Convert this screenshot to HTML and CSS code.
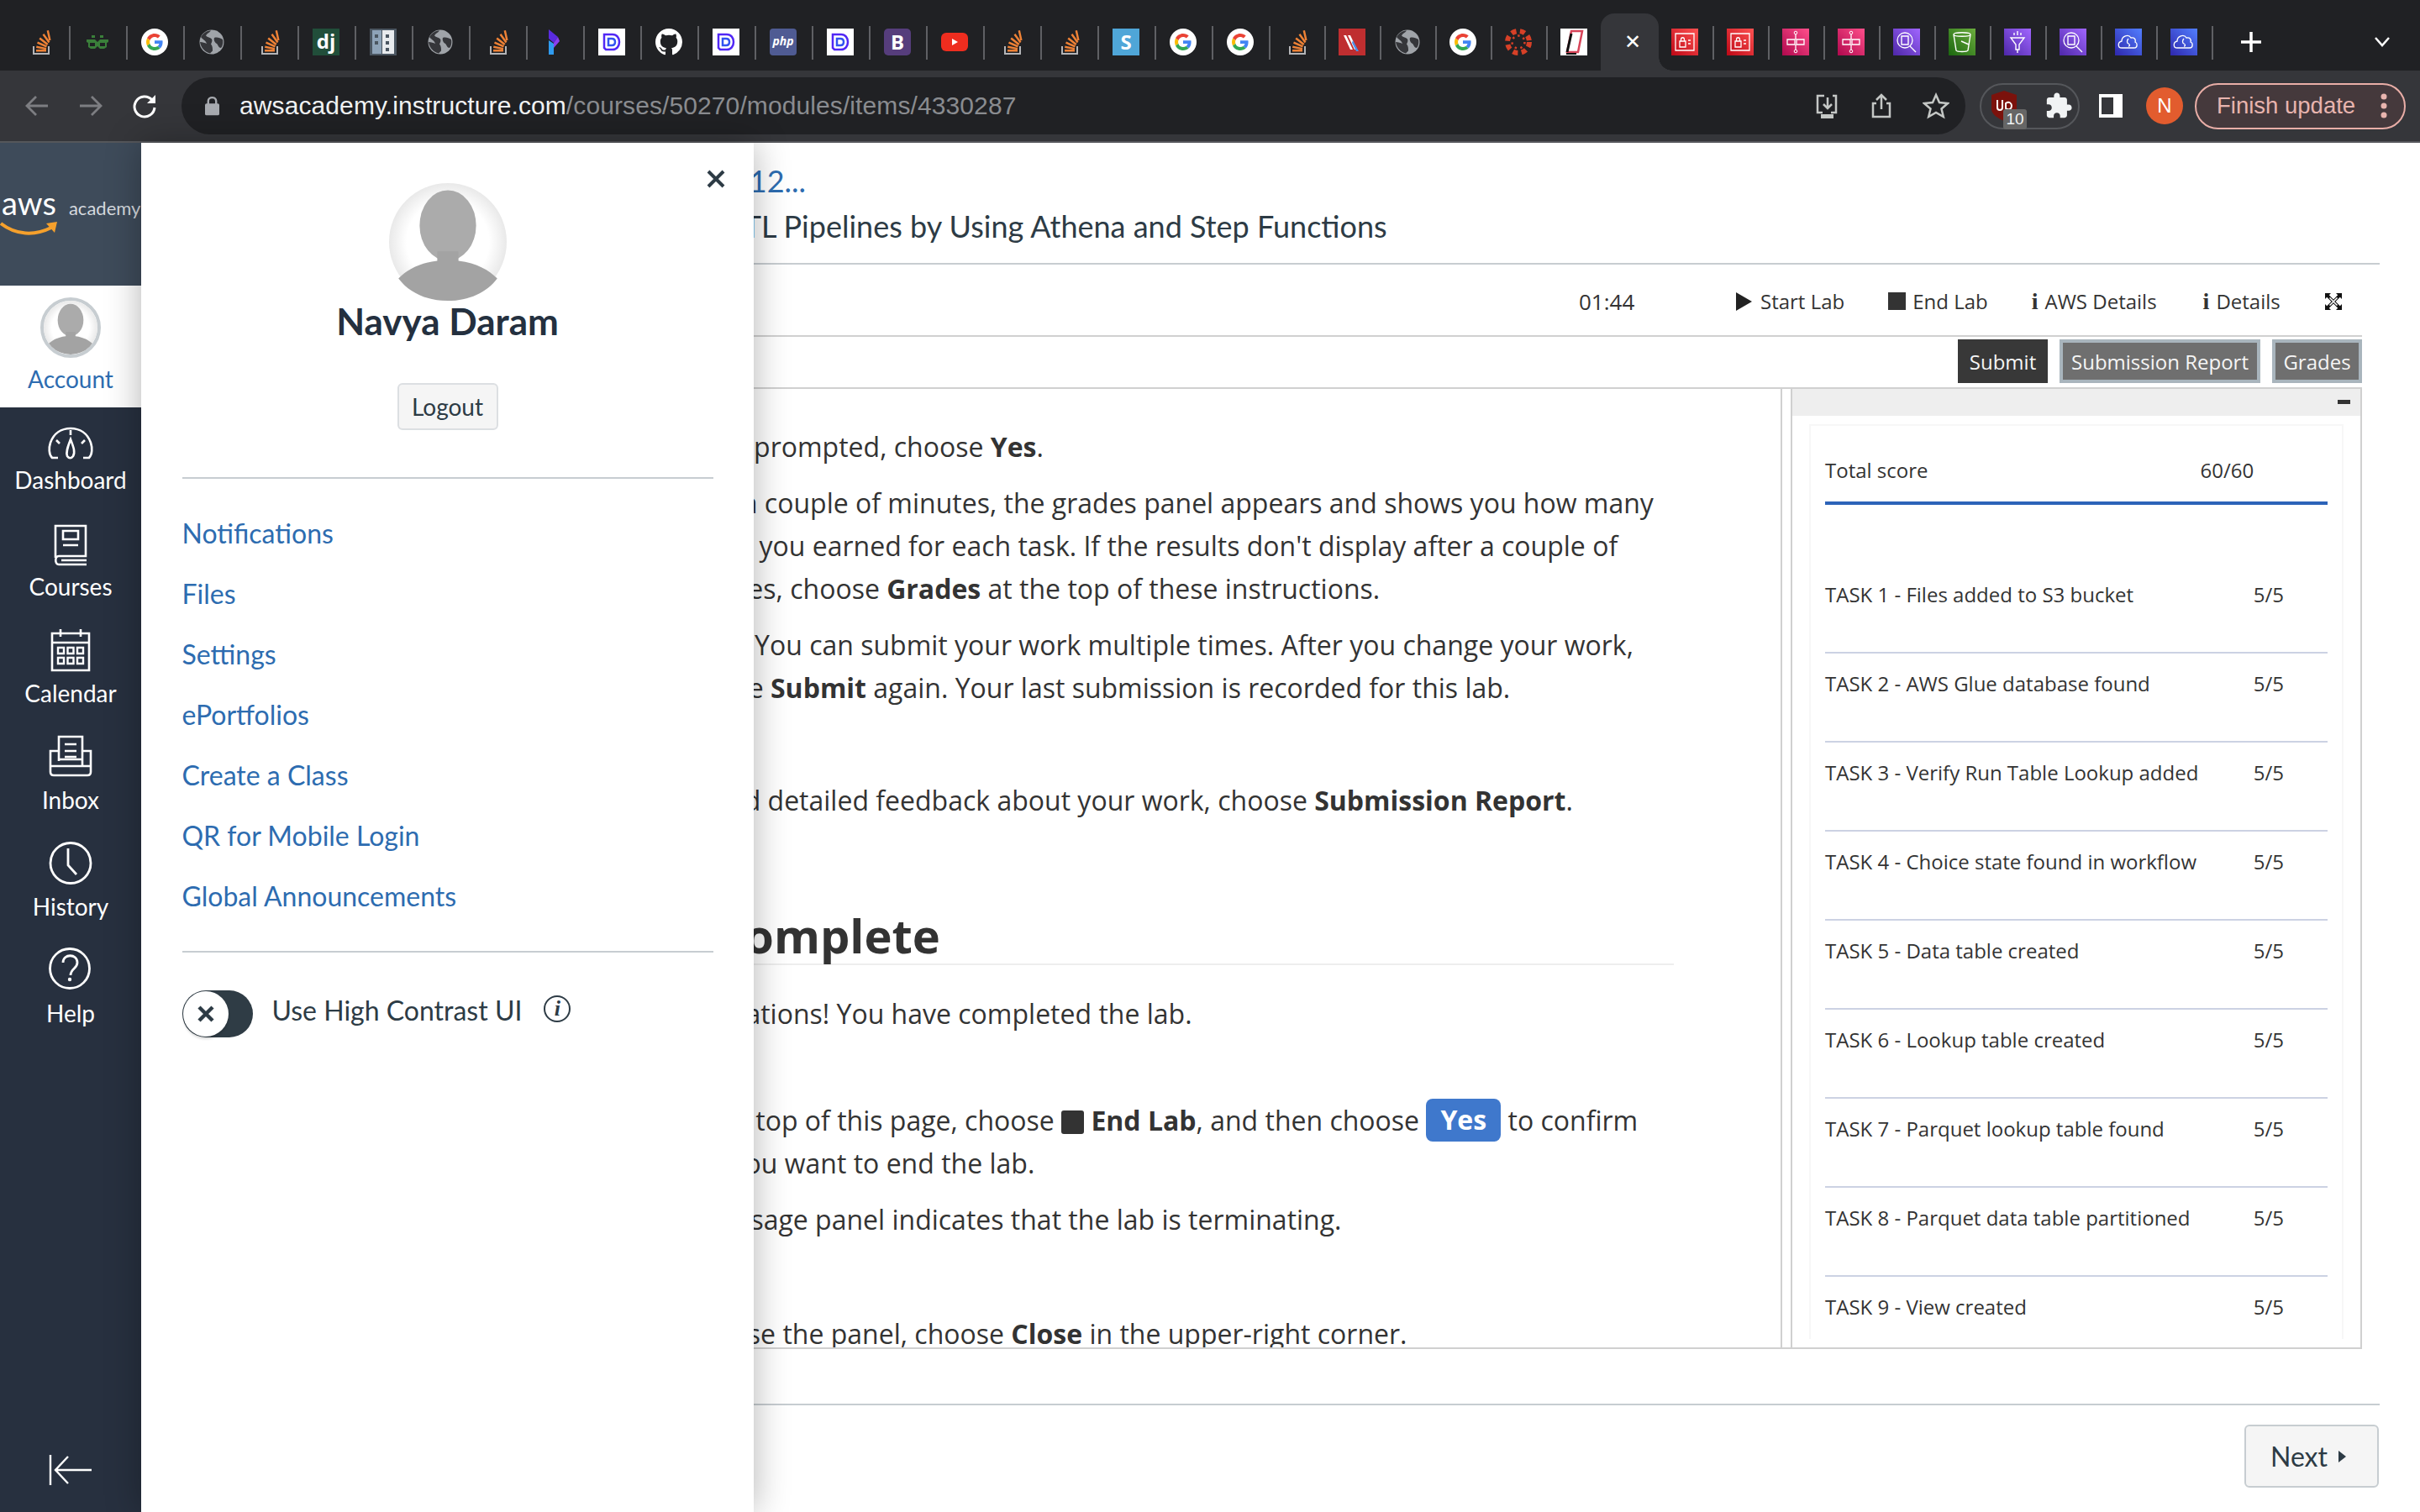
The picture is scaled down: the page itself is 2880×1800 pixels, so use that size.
FILE: index.html
```html
<!DOCTYPE html>
<html lang="en">
<head>
    <meta charset="UTF-8">
    <title>AWS Academy Lab</title>
    <link rel="stylesheet" href="styles.css">
</head>
<body>

    <!-- shared icons -->
    <svg class="defs" width="0" height="0">
        <defs>
            <symbol id="so" viewBox="0 0 32 32">
                <path d="M7 21v10h20V21h-2v8H9v-8z" fill="#b4b5b8"/>
                <path d="M11 25h12v2.500H11zM11.500 20.500l11.700 2.400-.5 2.400-11.700-2.400zM13 15.500l11 4.800-1 2.300-11-4.800zM16 10.500l9.500 7.500-1.600 2-9.500-7.500zM20.500 6l7 9.700-2 1.500-7-9.700zM26 2l2.600 11.800-2.400.5L23.600 2.500z" fill="#ef8236"/>
            </symbol>
            <symbol id="gfg" viewBox="0 0 32 32">
                <path d="M3 13h10l3 3 3-3h10v3l-2 1v5l-3 2h-5l-3-3-3 3H8l-3-2v-5l-2-1zM7 17v4h6v-4zM19 17v4h6v-4zM9 8h4v3H9zM19 8h4v3h-4z" fill="#3a7f3a"/>
            </symbol>
            <symbol id="g" viewBox="0 0 32 32">
                <circle cx="16" cy="16" r="16" fill="#fff"/>
                <g transform="translate(6 6) scale(.4167)">
                    <path d="M24 9.500c3.540 0 6.710 1.220 9.210 3.600l6.850-6.850C35.900 2.380 30.470 0 24 0 14.620 0 6.510 5.380 2.560 13.220l7.980 6.190C12.430 13.720 17.740 9.500 24 9.500z" fill="#EA4335"/>
                    <path d="M46.980 24.550c0-1.570-.15-3.090-.38-4.550H24v9.020h12.940c-.58 2.960-2.260 5.480-4.780 7.180l7.730 6c4.510-4.180 7.090-10.360 7.090-17.650z" fill="#4285F4"/>
                    <path d="M10.530 28.590c-.48-1.450-.76-2.990-.76-4.590s.27-3.140.76-4.590l-7.980-6.190C.92 16.460 0 20.120 0 24c0 3.880.92 7.540 2.560 10.780l7.970-6.190z" fill="#FBBC05"/>
                    <path d="M24 48c6.480 0 11.930-2.130 15.890-5.810l-7.730-6c-2.150 1.450-4.920 2.300-8.160 2.300-6.260 0-11.570-4.220-13.470-9.910l-7.980 6.190C6.510 42.620 14.620 48 24 48z" fill="#34A853"/>
                </g>
            </symbol>
            <symbol id="globe" viewBox="0 0 32 32">
                <circle cx="16" cy="16" r="14.500" fill="#a0a4a9"/>
                <path d="M15 2.500c-2 2.500-5 3.500-6 6 2 2 5 2 7 4 1 2 0 4-1 6 2 2 2 5 2 8l-3 3C8 28 3 23 2 16c3 0 6 1 8 2-1-4-5-5-7-8C6 5 10 2.500 15 2.500zM19 11c3-1 7 0 10 2 .8 4 0 8-2 10-3 0-3-3-5-5-2-1-4-4-3-7z" fill="#35363a"/>
            </symbol>
            <symbol id="dv" viewBox="0 0 32 32">
                <rect width="32" height="32" fill="#fff"/>
                <path d="M7 7h10c5 0 8 4 8 9s-3 9-8 9H9l-2-2z" fill="none" stroke="#5127f5" stroke-width="2.500"/>
                <path d="M12 20v-8h4c3 0 4 2 4 4s-1 4-4 4z" fill="none" stroke="#3153f0" stroke-width="2.500"/>
            </symbol>
            <symbol id="gh" viewBox="0 0 16 16">
                <path d="M8 0C3.580 0 0 3.580 0 8c0 3.540 2.290 6.530 5.470 7.590.4.07.55-.17.55-.38 0-.19-.01-.82-.01-1.490-2.010.37-2.530-.49-2.690-.94-.09-.23-.48-.94-.82-1.130-.28-.15-.68-.52-.01-.53.63-.01 1.080.58 1.230.82.72 1.210 1.870.87 2.330.66.07-.52.28-.87.51-1.070-1.780-.2-3.640-.89-3.640-3.950 0-.87.31-1.590.82-2.150-.08-.2-.36-1.020.08-2.120 0 0 .67-.21 2.200.82.64-.18 1.320-.27 2-.27s1.360.09 2 .27c1.530-1.040 2.200-.82 2.200-.82.44 1.100.16 1.920.08 2.120.51.56.82 1.270.82 2.150 0 3.070-1.870 3.750-3.650 3.950.29.25.54.73.54 1.480 0 1.070-.01 1.930-.01 2.200 0 .21.15.46.55.38A8.013 8.013 0 0016 8c0-4.420-3.580-8-8-8z" fill="#fff"/>
            </symbol>
            <symbol id="iam" viewBox="0 0 32 32">
                <rect width="32" height="32" fill="url(#red)"/>
                <path d="M5 6h22v20H5zM10 15h7v7h-7zM11.500 15v-2c0-3 4-3 4 0v2M20 14h3M20 18h3" fill="none" stroke="#fff" stroke-width="1.300"/>
            </symbol>
            <symbol id="sfn" viewBox="0 0 32 32">
                <rect width="32" height="32" fill="url(#pink)"/>
                <path d="M16 7v6M16 19v6M6 13h9v6H6zM17 13h9v6h-9z" fill="none" stroke="#fff" stroke-width="1.300"/>
                <circle cx="16" cy="5" r="1.800" fill="none" stroke="#fff"/>
                <circle cx="16" cy="27" r="1.800" fill="none" stroke="#fff"/>
            </symbol>
            <symbol id="athena" viewBox="0 0 32 32">
                <rect width="32" height="32" fill="url(#purple)"/>
                <circle cx="14" cy="14" r="9" fill="none" stroke="#fff" stroke-width="1.300"/>
                <path d="M10 9h8v10h-8zM20 21l7 7" fill="none" stroke="#fff" stroke-width="1.400"/>
            </symbol>
            <symbol id="s3" viewBox="0 0 32 32">
                <rect width="32" height="32" fill="url(#green)"/>
                <path d="M6 7c0-3 20-3 20 0l-3 19c-1 2-13 2-14 0zM6 7c0 3 20 3 20 0M15 15l9 4" fill="none" stroke="#fff" stroke-width="1.400"/>
            </symbol>
            <symbol id="glue" viewBox="0 0 32 32">
                <rect width="32" height="32" fill="url(#purple)"/>
                <path d="M8 11h16l-6 8v6h-4v-6zM16 3v5M12 5v3M20 5v3M16 25v4" fill="none" stroke="#fff" stroke-width="1.400"/>
            </symbol>
            <symbol id="cloud" viewBox="0 0 32 32">
                <rect width="32" height="32" fill="url(#blue)"/>
                <path d="M8 23c-5 0-5-7 0-8 0-6 8-9 11-4 4-1 6 2 5 5 3 1 3 7-1 7zM16 12c-2 2-2 5 0 6s2 3 0 3" fill="none" stroke="#fff" stroke-width="1.300"/>
            </symbol>
            <symbol id="person" viewBox="0 0 100 100">
                <circle cx="50" cy="50" r="50" fill="url(#halo)"/>
                <ellipse cx="50" cy="36" rx="24" ry="30" fill="#ababab"/>
                <path d="M41 58h18v8c16 2 26 8 33 15-9 12-24 19-42 19s-33-7-42-19c7-7 17-13 33-15z" fill="#a3a3a3"/>
            </symbol>
            <linearGradient id="red" x1="0" y1="1" x2="1" y2="0"><stop offset="0" stop-color="#bd0816"/><stop offset="1" stop-color="#ff5252"/></linearGradient>
            <linearGradient id="pink" x1="0" y1="1" x2="1" y2="0"><stop offset="0" stop-color="#b0084d"/><stop offset="1" stop-color="#ff4f8b"/></linearGradient>
            <linearGradient id="purple" x1="0" y1="1" x2="1" y2="0"><stop offset="0" stop-color="#4d27a8"/><stop offset="1" stop-color="#a166ff"/></linearGradient>
            <linearGradient id="green" x1="0" y1="1" x2="1" y2="0"><stop offset="0" stop-color="#1b660f"/><stop offset="1" stop-color="#6cae3e"/></linearGradient>
            <linearGradient id="blue" x1="0" y1="1" x2="1" y2="0"><stop offset="0" stop-color="#2e27ad"/><stop offset="1" stop-color="#527fff"/></linearGradient>
            <radialGradient id="halo"><stop offset=".7" stop-color="#ffffff"/><stop offset="1" stop-color="#e9e9e9"/></radialGradient>
        </defs>
    </svg>

    <!-- browser tabs -->
    <div class="tabstrip">
        <div class="tab"><svg class="fav"><use href="#so"/></svg></div>
        <div class="tab"><svg class="fav"><use href="#gfg"/></svg></div>
        <div class="tab"><svg class="fav"><use href="#g"/></svg></div>
        <div class="tab"><svg class="fav"><use href="#globe"/></svg></div>
        <div class="tab"><svg class="fav"><use href="#so"/></svg></div>
        <div class="tab"><span class="fav fav-dj">dj</span></div>
        <div class="tab">
            <svg class="fav" viewBox="0 0 32 32"><rect width="32" height="32" fill="#4b5661"/><rect x="3" y="2" width="11" height="28" fill="#8ea3b8"/><rect x="15" y="2" width="14" height="28" fill="#e8ebee"/><path d="M6 7h4v4H6zM6 15h4v4H6zM19 7h4v4h-4zM19 15h4v4h-4zM19 23h4v4h-4z" fill="#4b5661"/></svg>
        </div>
        <div class="tab"><svg class="fav"><use href="#globe"/></svg></div>
        <div class="tab"><svg class="fav"><use href="#so"/></svg></div>
        <div class="tab">
            <svg class="fav" viewBox="0 0 32 32"><path d="M9 1l11 9-5 7-6-5z" fill="#5a2be0"/><path d="M20 10l2 5-7 8v-6z" fill="#8a3ff0"/><path d="M9 14l6 4v13H9z" fill="#2f9bf0"/></svg>
        </div>
        <div class="tab"><svg class="fav"><use href="#dv"/></svg></div>
        <div class="tab"><svg class="fav"><use href="#gh"/></svg></div>
        <div class="tab"><svg class="fav"><use href="#dv"/></svg></div>
        <div class="tab"><span class="fav fav-php">php</span></div>
        <div class="tab"><svg class="fav"><use href="#dv"/></svg></div>
        <div class="tab"><span class="fav fav-b">B</span></div>
        <div class="tab">
            <svg class="fav" viewBox="0 0 32 32"><rect y="5" width="32" height="22" rx="6" fill="#ee2d1f"/><path d="M13 12l7 4-7 4z" fill="#fff"/></svg>
        </div>
        <div class="tab"><svg class="fav"><use href="#so"/></svg></div>
        <div class="tab"><svg class="fav"><use href="#so"/></svg></div>
        <div class="tab"><span class="fav fav-s">S</span></div>
        <div class="tab"><svg class="fav"><use href="#g"/></svg></div>
        <div class="tab"><svg class="fav"><use href="#g"/></svg></div>
        <div class="tab tab-sm"><svg class="fav"><use href="#so"/></svg></div>
        <div class="tab tab-sm">
            <svg class="fav" viewBox="0 0 32 32"><rect width="32" height="32" fill="#bf2e30"/><path d="M6 8h3l8 17h-3zM11 8h3l8 17h-3z" fill="#fff"/><path d="M17 14l7 13h-3l-5-10z" fill="#4c8fe8"/></svg>
        </div>
        <div class="tab tab-sm"><svg class="fav"><use href="#globe"/></svg></div>
        <div class="tab tab-sm"><svg class="fav"><use href="#g"/></svg></div>
        <div class="tab tab-sm">
            <svg class="fav" viewBox="0 0 32 32">
                <g fill="none" stroke="#d64027" stroke-width="6" stroke-dasharray="6 4.470"><circle cx="16" cy="16" r="13"/></g>
                <g fill="none" stroke="#d64027" stroke-width="2.500" stroke-dasharray="2.500 4.350"><circle cx="16" cy="16" r="7.500"/></g>
            </svg>
        </div>
        <div class="tab tab-sm tab-last">
            <svg class="fav" viewBox="0 0 32 32"><rect width="32" height="32" fill="#fff"/><path d="M13 3h13l-5 25H8z" fill="none" stroke="#d8455a" stroke-width="2.500"/><path d="M8 28l5-22" fill="none" stroke="#111" stroke-width="3"/><path d="M7 30h12" stroke="#111" stroke-width="2"/></svg>
        </div>
        <div class="tab-active"><span class="tab-close">✕</span></div>
        <div class="tab tab-sm"><svg class="fav"><use href="#iam"/></svg></div>
        <div class="tab tab-sm"><svg class="fav"><use href="#iam"/></svg></div>
        <div class="tab tab-sm"><svg class="fav"><use href="#sfn"/></svg></div>
        <div class="tab tab-sm"><svg class="fav"><use href="#sfn"/></svg></div>
        <div class="tab tab-sm"><svg class="fav"><use href="#athena"/></svg></div>
        <div class="tab tab-sm"><svg class="fav"><use href="#s3"/></svg></div>
        <div class="tab tab-sm"><svg class="fav"><use href="#glue"/></svg></div>
        <div class="tab tab-sm"><svg class="fav"><use href="#athena"/></svg></div>
        <div class="tab tab-sm"><svg class="fav"><use href="#cloud"/></svg></div>
        <div class="tab tab-sm"><svg class="fav"><use href="#cloud"/></svg></div>
        <svg class="new-tab" viewBox="0 0 26 26"><path d="M13 1v24M1 13h24" stroke="#fff" stroke-width="3.500" fill="none"/></svg>
        <svg class="tab-list" viewBox="0 0 20 14"><path d="M2 2l8 9 8-9" stroke="#fff" stroke-width="2.500" fill="none"/></svg>
    </div>

    <!-- browser toolbar -->
    <div class="toolbar">
        <div class="tb-btn"><svg width="32" height="32" viewBox="0 0 32 32"><path d="M29 16H4M15 5L4 16l11 11" stroke="#7d7e82" stroke-width="2.800" fill="none"/></svg></div>
        <div class="tb-btn"><svg width="32" height="32" viewBox="0 0 32 32"><path d="M3 16h25M17 5l11 11-11 11" stroke="#7d7e82" stroke-width="2.800" fill="none"/></svg></div>
        <div class="tb-btn"><svg width="32" height="32" viewBox="0 0 32 32"><path d="M25 9a12 12 0 1 0 3 9" stroke="#fff" stroke-width="3" fill="none"/><path d="M29 3v10H19z" fill="#fff"/></svg></div>
        <div class="omnibox">
            <svg class="lock" viewBox="0 0 18 24"><rect y="9" width="18" height="15" rx="2" fill="#a8abb0"/><path d="M4 10V6c0-6 10-6 10 0v4" stroke="#a8abb0" stroke-width="2.500" fill="none"/></svg>
            <div class="url"><span class="url-host">awsacademy.instructure.com</span>/courses/50270/modules/items/4330287</div>
            <div class="omni-icons">
                <svg width="32" height="32" viewBox="0 0 32 32"><path d="M11 24H5V4h8M23 4h4v20h-6M17 6v13M12 14l5 5 5-5" stroke="#c4c7c5" stroke-width="2.500" fill="none"/><path d="M9 26h15v5H9z" fill="#c4c7c5"/></svg>
                <svg width="32" height="32" viewBox="0 0 32 32"><path d="M16 20V3M10 9l6-6 6 6M10 13H6v16h20V13h-4" stroke="#c4c7c5" stroke-width="2.500" fill="none"/></svg>
                <svg width="32" height="32" viewBox="0 0 32 32"><path d="M16 3l4 9 10 1-7.500 6.500L24.800 29 16 24l-8.800 5 2.300-9.500L2 13l10-1z" stroke="#c4c7c5" stroke-width="2.500" fill="none"/></svg>
            </div>
        </div>
        <div class="ext-group">
            <div class="ublock">
                <svg width="30" height="36" viewBox="0 0 30 36"><path d="M15 0l15 5v17c0 6-8 11-15 14C8 33 0 28 0 22V5z" fill="#7b120c"/><path d="M7 11v9c0 4 6 4 6 0v-9M17 15c4-3 7 0 7 3s-3 6-7 3z" stroke="#fff" stroke-width="2" fill="none"/></svg>
                <span class="ublock-badge">10</span>
            </div>
            <svg class="puzzle" width="34" height="34" viewBox="0 0 24 24"><path d="M20.500 11H19V7c0-1.100-.9-2-2-2h-4V3.500C13 2.120 11.880 1 10.500 1S8 2.120 8 3.500V5H4c-1.100 0-1.990.9-1.990 2v3.800H3.500c1.490 0 2.700 1.210 2.700 2.700s-1.210 2.700-2.700 2.700H2V20c0 1.100.9 2 2 2h3.800v-1.500c0-1.490 1.210-2.700 2.700-2.700 1.490 0 2.700 1.210 2.700 2.700V22H17c1.100 0 2-.9 2-2v-4h1.500c1.380 0 2.500-1.120 2.500-2.500S21.880 11 20.500 11z" fill="#f1f3f4"/></svg>
        </div>
        <svg class="side-panel" width="28" height="28" viewBox="0 0 28 28"><path d="M0 0h28v28H0z" fill="#fff"/><path d="M3 4h14v20H3z" fill="#35363a"/></svg>
        <div class="profile">N</div>
        <div class="update-pill">
            <span>Finish update</span>
            <svg width="8" height="30" viewBox="0 0 8 30"><circle cx="4" cy="4" r="3.500" fill="#e8b4ae"/><circle cx="4" cy="15" r="3.500" fill="#e8b4ae"/><circle cx="4" cy="26" r="3.500" fill="#e8b4ae"/></svg>
        </div>
    </div>

    <div class="page">
        <!-- global nav -->
        <nav class="global-nav">
            <div class="logo">
                <div class="logo-text"><span class="logo-aws">aws</span><span class="logo-academy">academy</span></div>
                <svg class="logo-smile" width="70" height="18" viewBox="0 0 70 18"><path d="M1 3c18 14 40 15 60 5" stroke="#f5a02c" stroke-width="4" fill="none"/><path d="M55 3l13-2-3 13z" fill="#f5a02c"/></svg>
            </div>
            <a class="nav-account">
                <svg class="nav-avatar" viewBox="0 0 100 100"><use href="#person"/></svg>
                <span>Account</span>
            </a>
            <a class="nav-item">
                <svg class="nav-icon" viewBox="0 0 56 56"><path d="M13 52H6C2 48 2 40 4 34 8 23 17 17 28 17s20 6 24 17c2 6 2 14-2 18h-7M28 30c3 8 6 15 3 20-2 3-5 3-7 0-2-5 1-12 4-20zM28 19v6M11 31l4 4M45 31l-4 4" stroke="#fff" stroke-width="2.600" fill="none"/></svg>
                <span>Dashboard</span>
            </a>
            <a class="nav-item">
                <svg class="nav-icon" viewBox="0 0 56 56"><path d="M10 44V6h36v36H14c-5 0-5 10 0 10h33M17 47h30M19 12h18v10H19zM19 29h18" stroke="#fff" stroke-width="2.600" fill="none"/></svg>
                <span>Courses</span>
            </a>
            <a class="nav-item">
                <svg class="nav-icon" viewBox="0 0 56 56"><path d="M6 7h44v44H6zM6 18h44M16 2v9M40 2v9" stroke="#fff" stroke-width="2.600" fill="none"/><path d="M13 24h7v7h-7zM24.500 24h7v7h-7zM36 24h7v7h-7zM13 36h7v7h-7zM24.500 36h7v7h-7zM36 36h7v7h-7z" stroke="#fff" stroke-width="2.400" fill="none"/></svg>
                <span>Calendar</span>
            </a>
            <a class="nav-item">
                <svg class="nav-icon" viewBox="0 0 56 56"><path d="M14 32V3h28v29M21 12h14M21 20h14M21 27h14M14 20H4v25c0 3 2 4 4 4h40c2 0 4-1 4-4V20H42M4 38h48M14 30h28v8" stroke="#fff" stroke-width="2.600" fill="none"/></svg>
                <span>Inbox</span>
            </a>
            <a class="nav-item">
                <svg class="nav-icon" viewBox="0 0 56 56"><circle cx="28" cy="26.500" r="24" stroke="#fff" stroke-width="2.800" fill="none"/><path d="M25 9v20l10 11" stroke="#fff" stroke-width="2.800" fill="none"/></svg>
                <span>History</span>
            </a>
            <a class="nav-item">
                <svg class="nav-icon" viewBox="0 0 56 56"><circle cx="27" cy="25" r="23.500" stroke="#fff" stroke-width="2.800" fill="none"/><path d="M19 18c0-11 17-11 17 0 0 7-8 7-8 15" stroke="#fff" stroke-width="2.800" fill="none"/><circle cx="27" cy="38" r="2.200" fill="#fff"/></svg>
                <span>Help</span>
            </a>
            <svg class="nav-collapse" width="52" height="38" viewBox="0 0 52 38"><path d="M2 1v36M51 19H8M23 3L8 19l15 16" stroke="#fff" stroke-width="2.400" fill="none"/></svg>
        </nav>

        <main class="main">
            <div class="crumb"><span class="off">Lab: Guided Lab </span>12...</div>
            <h1 class="module-title"><span class="off">Building E</span>TL Pipelines by Using Athena and Step Functions</h1>

            <div class="lab-area">
                <div class="lab-bar">
                    <span class="lab-clock">01:44</span>
                    <span class="lab-action"><i class="ico-play"></i>Start Lab</span>
                    <span class="lab-action lab-end"><i class="ico-stop"></i>End Lab</span>
                    <span class="lab-action lab-aws"><b class="ico-info">i</b>AWS Details</span>
                    <span class="lab-action lab-details"><b class="ico-info">i</b>Details</span>
                    <svg class="lab-expand" width="22" height="22" viewBox="0 0 22 22"><path d="M1 1h7L5.800 3.200 11 8.400l5.200-5.200L14 1h7v7l-2.200-2.200L13.600 11l5.200 5.200L21 14v7h-7l2.200-2.200L11 13.600l-5.200 5.200L8 21H1v-7l2.200 2.200L8.400 11 3.200 5.800 1 8z" fill="#111"/><path d="M6.500 6.500l9 9M15.500 6.500l-9 9" stroke="#fff" stroke-width="1.600"/></svg>
                </div>
                <div class="lab-buttons">
                    <span class="btn-submit">Submit</span>
                    <span class="btn-grey btn-report">Submission Report</span>
                    <span class="btn-grey btn-grades">Grades</span>
                </div>

                <div class="panes">
                    <div class="instructions">
                        <p class="step step-first"><span class="off">When </span>prompted, choose <b>Yes</b>.</p>
                        <p class="step"><span class="off">After </span>a couple of minutes, the grades panel appears and shows you how many <span class="off">points </span>you earned for each task. If the results don't display after a couple of <span class="off">minut</span>es, choose <b>Grades</b> at the top of these instructions.</p>
                        <p class="step"><b class="off">Note: </b>You can submit your work multiple times. After you change your work, <span class="off">choos</span>e <b>Submit</b> again. Your last submission is recorded for this lab.</p>
                        <p class="step step-gap"><span class="off">To fin</span>d detailed feedback about your work, choose <b>Submission Report</b>.</p>
                        <h2 class="lab-heading"><span class="off">Lab c</span>omplete</h2>
                        <p class="congrats"><span class="off">Congratul</span>ations! You have completed the lab.</p>
                        <p class="step step-end"><span class="off">At the </span>top of this page, choose <i class="ico-inline"></i> <b>End Lab</b>, and then choose <span class="yes-btn">Yes</span> to confirm <span class="off">that y</span>ou want to end the lab.</p>
                        <p class="step"><span class="off">A mes</span>sage panel indicates that the lab is terminating.</p>
                        <p class="step step-last"><span class="off">To clo</span>se the panel, choose <b>Close</b> in the upper-right corner.</p>
                    </div>

                    <div class="grades">
                        <div class="grades-head"><span class="grades-min"></span></div>
                        <div class="grades-body">
                            <div class="score-total"><span>Total score</span><span class="total-val">60/60</span></div>
                            <div class="score-row"><span>TASK 1 - Files added to S3 bucket</span><span class="score-val">5/5</span></div>
                            <div class="score-row"><span>TASK 2 - AWS Glue database found</span><span class="score-val">5/5</span></div>
                            <div class="score-row"><span>TASK 3 - Verify Run Table Lookup added</span><span class="score-val">5/5</span></div>
                            <div class="score-row"><span>TASK 4 - Choice state found in workflow</span><span class="score-val">5/5</span></div>
                            <div class="score-row"><span>TASK 5 - Data table created</span><span class="score-val">5/5</span></div>
                            <div class="score-row"><span>TASK 6 - Lookup table created</span><span class="score-val">5/5</span></div>
                            <div class="score-row"><span>TASK 7 - Parquet lookup table found</span><span class="score-val">5/5</span></div>
                            <div class="score-row"><span>TASK 8 - Parquet data table partitioned</span><span class="score-val">5/5</span></div>
                            <div class="score-row"><span>TASK 9 - View created</span><span class="score-val">5/5</span></div>
                        </div>
                    </div>
                </div>
            </div>

            <div class="module-footer">
                <span class="btn-next">Next<i class="next-caret"></i></span>
            </div>

            <!-- account tray sits over the page -->
            <aside class="tray">
                <svg class="tray-close" width="22" height="22" viewBox="0 0 22 22"><path d="M2 2l18 18M20 2L2 20" stroke="#2d3b45" stroke-width="4" fill="none"/></svg>
                <svg class="tray-avatar" viewBox="0 0 100 100"><use href="#person"/></svg>
                <h2 class="tray-name">Navya Daram</h2>
                <span class="btn-logout">Logout</span>
                <hr class="tray-rule tray-rule-top">
                <ul class="tray-links">
                    <li>Notifications</li>
                    <li>Files</li>
                    <li>Settings</li>
                    <li>ePortfolios</li>
                    <li>Create a Class</li>
                    <li>QR for Mobile Login</li>
                    <li>Global Announcements</li>
                </ul>
                <hr class="tray-rule tray-rule-bottom">
                <div class="contrast-row">
                    <div class="toggle">
                        <div class="toggle-knob">
                            <svg width="22" height="22" viewBox="0 0 22 22"><path d="M3 3l16 16M19 3L3 19" stroke="#2d3b45" stroke-width="4.500" fill="none"/></svg>
                        </div>
                    </div>
                    <span class="contrast-label">Use High Contrast UI</span>
                    <span class="contrast-info">i</span>
                </div>
            </aside>
        </main>
    </div>

</body>
</html>
```

FILE: styles.css
```css
/* General Reset */
* {
    margin: 0;
    padding: 0;
    box-sizing: border-box;
}

body {
    width: 2880px;
    height: 1800px;
    overflow: hidden;
    background: #fff;
    font-family: 'Lato', sans-serif;
    color: #2d3b45;
    display: flex;
    flex-direction: column;
}

.defs {
    position: absolute;
}

/* keeps the space of words that lie under the tray */
.off {
    visibility: hidden;
}

/* Browser tabs */
.tabstrip {
    height: 84px;
    flex: none;
    background: #202124;
    display: flex;
    padding-left: 16px;
    position: relative;
}

.tab {
    width: 68px;
    height: 40px;
    margin-top: 31px;
    padding: 3px 0 0 16px;
    border-right: 2px solid #5f6064;
    flex: none;
}

.tab-sm {
    width: 66px;
    padding-left: 15px;
}

.tab-last {
    border-right: none;
}

.fav {
    display: block;
    width: 32px;
    height: 32px;
    text-align: center;
    color: #fff;
    font-family: 'Open Sans', sans-serif;
    font-weight: 700;
}

.fav-dj {
    background: #214e3a;
    font-size: 24px;
    line-height: 30px;
}

.fav-php {
    background: #4f5b93;
    border-radius: 4px;
    font-size: 14px;
    font-style: italic;
    line-height: 30px;
}

.fav-b {
    background: #563d7c;
    border-radius: 5px;
    font-size: 24px;
    line-height: 32px;
}

.fav-s {
    background: #4fa6d8;
    font-size: 24px;
    line-height: 32px;
}

.tab-active {
    width: 69px;
    margin: 16px 0 0 -3px;
    height: 68px;
    padding-left: 7px;
    background: #35363a;
    border-radius: 16px 16px 0 0;
    flex: none;
    text-align: center;
    position: relative;
}

.tab-active::after {
    content: "";
    position: absolute;
    left: 100%;
    bottom: 0;
    width: 16px;
    height: 16px;
    background: radial-gradient(circle at 100% 0, #202124 15.500px, #35363a 16px);
}

.tab-close {
    color: #fff;
    font-size: 24px;
    line-height: 68px;
    font-family: 'DejaVu Sans', sans-serif;
}

.new-tab {
    position: absolute;
    left: 2666px;
    top: 37px;
    width: 26px;
    height: 26px;
}

.tab-list {
    position: absolute;
    left: 2825px;
    top: 43px;
    width: 20px;
    height: 14px;
}

/* Browser toolbar */
.toolbar {
    height: 86px;
    flex: none;
    background: #35363a;
    border-bottom: 2px solid #55575b;
    display: flex;
    align-items: center;
    padding-left: 12px;
}

.tb-btn {
    width: 64px;
    display: flex;
    justify-content: center;
}

.omnibox {
    width: 2123px;
    height: 68px;
    margin: 0 17px 0 12px;
    background: #202124;
    border-radius: 34px;
    display: flex;
    align-items: center;
    padding: 0 19px 0 28px;
}

.lock {
    width: 17px;
    height: 24px;
    margin-right: 24px;
}

.url {
    font-family: 'Liberation Sans', sans-serif;
    font-size: 30px;
    letter-spacing: 0.1px;
    color: #8a8c90;
    white-space: nowrap;
}

.url-host {
    color: #f1f3f4;
}

.omni-icons {
    margin-left: auto;
    display: flex;
    gap: 33px;
}

.ext-group {
    width: 119px;
    height: 55px;
    border: 2px solid #55575b;
    border-radius: 28px;
    display: flex;
    align-items: center;
    padding-left: 12px;
    gap: 33px;
    flex: none;
}

.ublock {
    position: relative;
    height: 36px;
}

.ublock-badge {
    position: absolute;
    left: 14px;
    top: 22px;
    width: 28px;
    height: 24px;
    background: #666;
    border-radius: 3px;
    color: #f1f3f4;
    font-family: 'Liberation Sans', sans-serif;
    font-size: 19px;
    line-height: 24px;
    text-align: center;
}

.side-panel {
    margin-left: 23px;
    flex: none;
}

.profile {
    width: 44px;
    height: 44px;
    margin-left: 28px;
    border-radius: 50%;
    background: #e25c2e;
    color: #fff;
    font-family: 'Liberation Sans', sans-serif;
    font-size: 24px;
    line-height: 44px;
    text-align: center;
    flex: none;
}

.update-pill {
    width: 251px;
    height: 55px;
    margin-left: 14px;
    border: 2px solid #e9aea7;
    border-radius: 28px;
    background: #45393c;
    color: #e8b4ae;
    font-family: 'Liberation Sans', sans-serif;
    font-size: 27.500px;
    display: flex;
    align-items: center;
    justify-content: space-between;
    padding: 0 20px 0 24px;
    flex: none;
}

/* Canvas page */
.page {
    flex: 1;
    display: flex;
    min-height: 0;
}

.global-nav {
    width: 168px;
    flex: none;
    background: #27303f;
    color: #fff;
    display: flex;
    flex-direction: column;
    align-items: center;
    position: relative;
}

.logo {
    width: 168px;
    height: 170px;
    background: #3e4b5a;
    padding-top: 48px;
    overflow: hidden;
    flex: none;
}

.logo-text {
    display: flex;
    align-items: baseline;
    white-space: nowrap;
    padding-left: 2px;
    height: 46px;
}

.logo-aws {
    font-size: 38px;
    line-height: 46px;
    margin-right: 15px;
}

.logo-academy {
    font-size: 22px;
    color: #d5d9de;
}

.logo-smile {
    display: block;
    margin-top: -1px;
}

.nav-account {
    width: 168px;
    height: 145px;
    background: #fff;
    color: #2d6cb0;
    font-size: 28px;
    display: flex;
    flex-direction: column;
    align-items: center;
    padding-top: 14px;
    flex: none;
}

.nav-avatar {
    width: 72px;
    height: 72px;
    border: 4px solid #c7cdd1;
    border-radius: 50%;
    margin-bottom: 8px;
}

.nav-item {
    width: 168px;
    height: 127px;
    padding-top: 8px;
    font-size: 28px;
    line-height: 36px;
    display: flex;
    flex-direction: column;
    align-items: center;
    flex: none;
}

.nav-icon {
    width: 56px;
    height: 56px;
    margin-bottom: 4px;
}

.nav-collapse {
    position: absolute;
    left: 58px;
    bottom: 31px;
}

.main {
    flex: 1;
    min-width: 0;
    position: relative;
    padding-right: 48px;
}

.crumb {
    padding-top: 27px;
    padding-left: 460px;
    font-size: 36px;
    line-height: 36px;
    color: #2d6cb0;
    white-space: nowrap;
}

.module-title {
    padding-left: 559px;
    margin-top: 11px;
    height: 53px;
    font-size: 36px;
    line-height: 50px;
    font-weight: 400;
    white-space: nowrap;
}

.lab-area {
    margin-top: 16px;
    border-top: 2px solid #c7cdd1;
}

.lab-bar {
    height: 86px;
    margin-right: 21px;
    padding-top: 3px;
    border-bottom: 2px solid #d0d0d0;
    display: flex;
    align-items: center;
    font-family: 'Open Sans', sans-serif;
    font-size: 24px;
    color: #333;
    white-space: nowrap;
}

.lab-clock {
    margin-left: 1711px;
    width: 187px;
    font-size: 26px;
}

.lab-action {
    display: flex;
    align-items: center;
}

.lab-end {
    margin-left: 52px;
}

.lab-aws {
    margin-left: 52px;
}

.lab-details {
    margin-left: 55px;
}

.ico-play {
    width: 0;
    height: 0;
    border-left: 19px solid #222;
    border-top: 11px solid transparent;
    border-bottom: 11px solid transparent;
    margin-right: 10px;
}

.ico-stop {
    width: 21px;
    height: 21px;
    background: #333;
    margin-right: 8px;
}

.ico-info {
    font-family: 'Liberation Serif', serif;
    font-weight: 700;
    font-size: 28px;
    margin-right: 8px;
}

.lab-expand {
    margin-left: 52px;
}

.lab-buttons {
    height: 62px;
    margin-right: 21px;
    border-bottom: 2px solid #d0d0d0;
    display: flex;
    justify-content: flex-end;
    gap: 14px;
    padding-top: 3px;
    font-family: 'Open Sans', sans-serif;
    font-size: 24px;
}

.btn-submit,
.btn-grey {
    height: 52px;
    color: #f5f5f5;
    display: flex;
    align-items: center;
    justify-content: center;
    white-space: nowrap;
}

.btn-submit {
    width: 107px;
    background: #383838;
}

.btn-grey {
    background: #6f6f6f;
    border: 4px solid #a9b5bd;
}

.btn-report {
    width: 239px;
}

.btn-grades {
    width: 107px;
}

.panes {
    height: 1143px;
    margin-right: 21px;
    border-bottom: 2px solid #d0d0d0;
    display: flex;
}

.instructions {
    width: 1953px;
    flex: none;
    overflow: hidden;
    border-right: 2px solid #d0d0d0;
    font-family: 'Open Sans', sans-serif;
    font-size: 32px;
    line-height: 51px;
    color: #333;
}

.step {
    width: 1202px;
    margin-left: 634px;
    margin-top: 16px;
}

.step-first {
    margin-top: 43px;
}

.step-gap {
    margin-top: 83px;
}

.step-end {
    margin-top: 76px;
}

.step-last {
    margin-top: 85px;
}

.lab-heading {
    width: 1250px;
    margin: 105px 0 0 574px;
    height: 66px;
    line-height: 60px;
    font-size: 56px;
    font-weight: 700;
    border-bottom: 2px solid #eee;
}

.congrats {
    margin: 32px 0 0 573px;
}

.ico-inline {
    display: inline-block;
    width: 27px;
    height: 28px;
    background: #333;
    border-radius: 3px;
    vertical-align: -4px;
}

.yes-btn {
    display: inline-block;
    height: 51px;
    padding: 0 17px;
    background: #3f78cc;
    border-radius: 8px;
    color: #fff;
    font-weight: 700;
    line-height: 49px;
    vertical-align: 1px;
}

.grades {
    margin-left: 10px;
    width: 680px;
    flex: none;
    border-left: 2px solid #d0d0d0;
    border-right: 2px solid #d0d0d0;
    font-family: 'Open Sans', sans-serif;
    font-size: 24px;
    color: #333;
    overflow: hidden;
    display: flex;
    flex-direction: column;
}

.grades-head {
    height: 32px;
    flex: none;
    background: #eee;
    position: relative;
}

.grades-min {
    position: absolute;
    right: 12px;
    top: 13px;
    width: 15px;
    height: 5px;
    background: #333;
}

.grades-body {
    margin: 10px 20px 10px 20px;
    border: 2px solid #f7f7f7;
    border-bottom: none;
    padding: 0 17px;
    overflow: hidden;
    flex: 1;
}

.score-total {
    height: 94px;
    margin-bottom: 71px;
    padding-top: 35px;
    line-height: 36px;
    border-bottom: 4px solid #2c63b8;
    display: flex;
}

.total-val {
    margin-left: 324px;
}

.score-row {
    height: 106px;
    padding-top: 18px;
    line-height: 36px;
    border-bottom: 2px solid #ccd2e3;
    display: flex;
    justify-content: space-between;
}

.score-val {
    margin-right: 52px;
}

.module-footer {
    margin-top: 65px;
    border-top: 2px solid #c7cdd1;
    padding-top: 23px;
    display: flex;
    justify-content: flex-end;
    padding-right: 1px;
}

.btn-next {
    width: 160px;
    height: 75px;
    background: #f5f5f5;
    border: 2px solid #c7cdd1;
    border-radius: 6px;
    font-size: 32px;
    display: flex;
    align-items: center;
    padding-left: 29px;
}

.next-caret {
    width: 0;
    height: 0;
    margin-left: 13px;
    border-left: 9px solid #2d3b45;
    border-top: 7px solid transparent;
    border-bottom: 7px solid transparent;
}

/* Account tray */
.tray {
    position: absolute;
    left: 0;
    top: 0;
    width: 729px;
    height: 100%;
    background: #fff;
    box-shadow: 0 0 40px rgba(0, 0, 0, 0.3);
    padding: 48px 48px 0;
    display: flex;
    flex-direction: column;
    align-items: center;
}

.tray-close {
    position: absolute;
    right: 34px;
    top: 32px;
}

.tray-avatar {
    width: 140px;
    height: 140px;
    flex: none;
}

.tray-name {
    font-size: 44px;
    line-height: 52px;
    font-weight: 700;
    color: #24303f;
    margin-top: -2px;
}

.btn-logout {
    width: 120px;
    height: 56px;
    margin-top: 48px;
    background: #f5f5f5;
    border: 2px solid #dcdfe2;
    border-radius: 6px;
    font-size: 28px;
    line-height: 52px;
    text-align: center;
}

.tray-rule {
    width: 632px;
    border: none;
    height: 2px;
    background: #c7cdd1;
    flex: none;
}

.tray-rule-top {
    margin-top: 56px;
}

.tray-rule-bottom {
    margin-top: 29px;
}

.tray-links {
    list-style: none;
    width: 632px;
    margin-top: 29px;
    font-size: 32px;
    line-height: 72px;
    color: #2d6cb0;
}

.contrast-row {
    width: 632px;
    margin-top: 45px;
    display: flex;
    align-items: flex-start;
}

.toggle {
    width: 84px;
    height: 56px;
    background: #2f3c45;
    border-radius: 28px;
    flex: none;
}

.toggle-knob {
    width: 54px;
    height: 54px;
    margin: 1px 0 0 1px;
    background: #fff;
    border-radius: 50%;
    display: flex;
    align-items: center;
    justify-content: center;
    box-shadow: 0 3px 3px rgba(0, 0, 0, 0.15);
}

.contrast-label {
    margin-left: 23px;
    font-size: 32px;
    line-height: 48px;
}

.contrast-info {
    width: 32px;
    height: 32px;
    margin: 6px 0 0 26px;
    border: 2px solid #2d3b45;
    border-radius: 50%;
    font-family: 'Liberation Serif', serif;
    font-size: 26px;
    font-style: italic;
    font-weight: 700;
    line-height: 28px;
    text-align: center;
}
```
